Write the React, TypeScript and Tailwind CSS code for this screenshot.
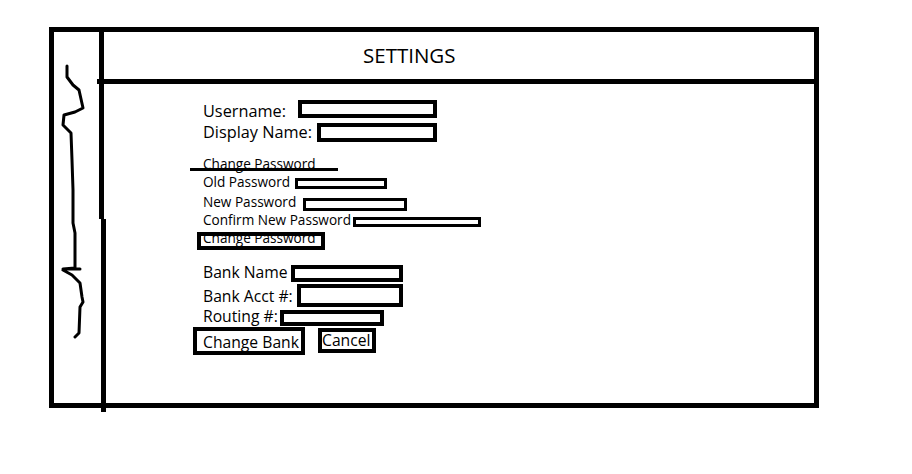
export default function App() {
  return (
    <div className="w-[912px] h-[474px] bg-white text-black font-['Open_Sans',sans-serif] pt-[27px] pl-[49px]">
      <div className="flex w-[770px] h-[381px] border-[5px] border-black">
        <div className="w-[45px] shrink-0">
          <svg width="45" height="371" viewBox="54 32 45 371" fill="none" stroke="black" strokeWidth="3" strokeLinecap="round" strokeLinejoin="round">
            <path d="M67,66 L67,77 L73,85 L79,90 L83,108 L75,112 L64,115 L63,125 L71,133 L72,160 L73,190 L73,223 L75,233 L75,268 L63,269 L80,269 M63,270 L72,275 L80,283 L82,297 L83,302 L80,307 L79,333 L75,337" />
          </svg>
        </div>
        <div className="w-[5px] shrink-0 flex flex-col">
          <div className="h-[187px] bg-black" />
          <div className="flex-1 -mb-[9px] bg-black translate-x-[2px]" />
        </div>
        <div className="flex-1 flex flex-col">
          <div className="h-[52px] -ml-[7px] pl-[266px] border-b-[5px] border-black text-[20.5px] leading-[47px]">SETTINGS</div>
          <div className="pl-[99px] pt-[16px] flex flex-col items-start">
            <div className="flex items-start">
              <span className="w-[95px] mt-[1px] text-[16.3px] leading-[20px] whitespace-nowrap">Username:</span>
              <div className="w-[139px] h-[18px] border-4 border-black" />
            </div>
            <div className="flex items-start">
              <span className="w-[114px] text-[16.3px] leading-[22px] whitespace-nowrap">Display Name:</span>
              <div className="mt-[2px] w-[120px] h-[19px] border-4 border-black" />
            </div>
            <div className="mt-[13px] text-[13.6px] leading-[16px] whitespace-nowrap">Change Password</div>
            <div className="-mt-[4px] -ml-[13px] w-[148px] h-[3px] bg-black" />
            <div className="mt-[3px] flex items-start">
              <span className="w-[92px] text-[13.6px] leading-[16px] whitespace-nowrap">Old Password</span>
              <div className="mt-[4px] w-[92px] h-[11px] border-[3px] border-black" />
            </div>
            <div className="mt-[4px] flex items-start">
              <span className="w-[100px] text-[13.6px] leading-[16px] whitespace-nowrap">New Password</span>
              <div className="mt-[4px] w-[104px] h-[13px] border-[3px] border-black" />
            </div>
            <div className="mt-[1px] flex items-start">
              <span className="w-[150px] text-[13.6px] leading-[16px] whitespace-nowrap">Confirm New Password</span>
              <div className="mt-[5px] w-[128px] h-[10px] border-[3px] border-black" />
            </div>
            <div className="mt-[4px] -ml-[6px] w-[128px] h-[18px] border-4 border-black pl-[2px] text-[13.6px] leading-[4px] whitespace-nowrap">
              Change Password
            </div>
            <div className="mt-[13px] flex items-start">
              <span className="w-[88px] text-[15.7px] leading-[18px] whitespace-nowrap">Bank Name</span>
              <div className="mt-[2px] w-[112px] h-[17px] border-4 border-black" />
            </div>
            <div className="mt-[2px] flex items-start">
              <span className="w-[94px] mt-[3px] text-[15.7px] leading-[18px] whitespace-nowrap">Bank Acct #:</span>
              <div className="w-[106px] h-[23px] border-4 border-black" />
            </div>
            <div className="flex items-start">
              <span className="w-[77px] text-[15.7px] leading-[18px] whitespace-nowrap">Routing #:</span>
              <div className="mt-[3px] w-[104px] h-[16px] border-4 border-black" />
            </div>
            <div className="mt-[1px] -ml-[10px] flex items-start">
              <div className="w-[112px] h-[28px] border-4 border-black pl-[6px] text-[15.7px] leading-[22px] whitespace-nowrap">Change Bank</div>
              <div className="ml-[13px] mt-[1px] w-[58px] h-[25px] border-4 border-black text-[15.7px] leading-[16px] whitespace-nowrap">Cancel</div>
            </div>
          </div>
        </div>
      </div>
    </div>
  );
}
